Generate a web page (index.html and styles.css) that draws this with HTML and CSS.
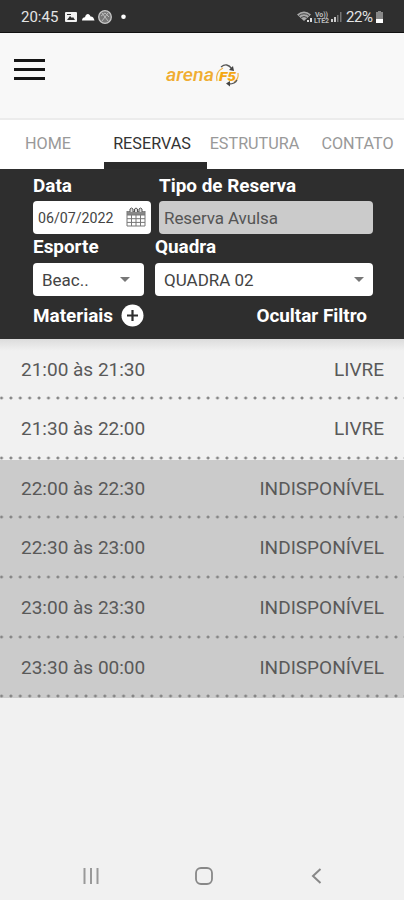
FILE: index.html
```
<!DOCTYPE html>
<html lang="pt-BR">
<head>
    <meta charset="UTF-8">
    <meta name="viewport" content="width=device-width, initial-scale=1.0">
    <title>Arena F5 - Reservas</title>
    <link rel="stylesheet" href="styles.css">
</head>
<body>
    <div class="status">
        <span class="clock">20:45</span>
        <svg class="status-left" width="66" height="18" viewBox="0 0 66 18">
            <rect x="1" y="4" width="12" height="10" rx="1" fill="#f2f2f2"/>
            <path d="M3 12l3-4 2 2 1-1 2 3z" fill="#2f2f2f"/>
            <path d="M3 6h4v1H3z" fill="#2f2f2f"/>
            <path d="M18 12.500c0-2.500 2-3.500 3-3.300C22 5 25.500 5 26.500 8.500c2-.2 3.500 1.500 4 4z" fill="#fff"/>
            <circle cx="41" cy="9" r="6.300" fill="#777" stroke="#c8c8c8" stroke-width="1.300"/>
            <path d="M38 5l6 8M44 5l-6 8M37 8l4-3 4 4" stroke="#bbb" fill="none"/>
            <circle cx="59.500" cy="8.700" r="2.300" fill="#fff"/>
        </svg>
        <svg class="status-right" width="48" height="18" viewBox="0 0 48 18">
            <path d="M0 6.500Q7 .5 14 6.500L7 13z" fill="#aaa"/>
            <path d="M2 7.500q5-3.500 10 0M4 9.500q3-2 6 0" stroke="#444" fill="none"/>
            <path d="M10 12h2v2h-2zM13 10h2v4h-2z" fill="#ddd"/>
            <text x="18" y="8.500" class="volte" textLength="13">Vo))</text>
            <text x="17" y="15" class="volte" textLength="15">LTE2</text>
            <path d="M34 14V11h2v3zM37 14V9h2v5z" fill="#ccc"/>
            <path d="M40 14V7h1.500v7zM43 14V4h1.500v10z" fill="#777"/>
        </svg>
        <span class="percent">22%</span>
        <svg class="battery" width="9" height="14" viewBox="0 0 9 14">
            <path d="M3 1h3v1h2v10H1V2h2z" fill="#888"/>
            <path d="M1 9h7v4H1z" fill="#fff"/>
        </svg>
    </div>

    <header class="header">
        <div class="menu"><i></i><i></i><i></i></div>
        <svg class="logo" width="80" height="30" viewBox="0 0 80 30">
            <text x="4" y="20" class="logo-arena" textLength="48" lengthAdjust="spacingAndGlyphs">arena</text>
            <text x="57" y="20" class="logo-f5" textLength="17" lengthAdjust="spacingAndGlyphs">F5</text>
            <path d="M55 20q-2-9 6-13" stroke="#f0b64b" stroke-width="1.300" fill="none"/>
            <path d="M59 6q6-5 11 2" stroke="#555" stroke-width="1.300" fill="none"/>
            <path d="M67 9l5 1-1-5z" fill="#444"/>
            <path d="M76 12q1 6-4 9" stroke="#f0b64b" stroke-width="1.200" fill="none"/>
            <path d="M75 19q-2 4-8 4" stroke="#555" stroke-width="1.300" fill="none"/>
            <path d="M68 20l-4 2.500 4 3z" fill="#444"/>
        </svg>
    </header>

    <nav class="tabs">
        <a class="tab home">HOME</a>
        <a class="tab reservas active">RESERVAS</a>
        <a class="tab estrutura">ESTRUTURA</a>
        <a class="tab contato">CONTATO</a>
    </nav>

    <section class="filter">
        <div class="line first">
            <div class="field data">
                <label>Data</label>
                <div class="input">
                    <span>06/07/2022</span>
                    <svg width="20" height="22" viewBox="0 0 20 22">
                        <path d="M1 4h18v4H1z" fill="#888"/>
                        <path d="M1 4v15h18V4M1 8h18M1 11.700h18M1 15.400h18M5.500 8v11M10 8v11M14.500 8v11" stroke="#777" fill="none"/>
                        <path d="M4 5V2q1.500-2 3 0v3M8.500 5V2q1.500-2 3 0v3M13 5V2q1.500-2 3 0v3" stroke="#555" fill="#ddd"/>
                    </svg>
                </div>
            </div>
            <div class="field tipo">
                <label>Tipo de Reserva</label>
                <div class="input disabled"><span>Reserva Avulsa</span></div>
            </div>
        </div>
        <div class="line second">
            <div class="field esporte">
                <label>Esporte</label>
                <div class="input select"><span>Beac..</span></div>
            </div>
            <div class="field quadra">
                <label>Quadra</label>
                <div class="input select"><span>QUADRA 02</span></div>
            </div>
        </div>
        <div class="actions">
            <span class="materiais">Materiais</span>
            <svg width="23" height="23" viewBox="0 0 23 23">
                <circle cx="11.500" cy="11.500" r="11" fill="#fff"/>
                <path d="M11.500 6v11M6 11.500h11" stroke="#2e2e2e" stroke-width="2.200"/>
            </svg>
            <span class="ocultar">Ocultar Filtro</span>
        </div>
    </section>

    <ul class="slots">
        <li><span>21:00 às 21:30</span><b>LIVRE</b></li>
        <li><span>21:30 às 22:00</span><b>LIVRE</b></li>
        <li class="off"><span>22:00 às 22:30</span><b>INDISPONÍVEL</b></li>
        <li class="off"><span>22:30 às 23:00</span><b>INDISPONÍVEL</b></li>
        <li class="off"><span>23:00 às 23:30</span><b>INDISPONÍVEL</b></li>
        <li class="off"><span>23:30 às 00:00</span><b>INDISPONÍVEL</b></li>
    </ul>

    <footer class="softkeys">
        <svg width="18" height="18" viewBox="0 0 18 18">
            <path d="M2.500 1v16M9 1v16M15.500 1v16" stroke="#999" stroke-width="2"/>
        </svg>
        <svg width="18" height="18" viewBox="0 0 18 18">
            <rect x="1" y="1" width="16" height="16" rx="5" stroke="#888" stroke-width="1.800" fill="none"/>
        </svg>
        <svg width="18" height="18" viewBox="0 0 18 18">
            <path d="M12.500 2L5 9l7.500 7" stroke="#888" stroke-width="2" fill="none"/>
        </svg>
    </footer>
</body>
</html>
```

FILE: styles.css
```
*{
    margin: 0;
    padding: 0;
    box-sizing: border-box;
}
body {
    width: 404px;
    height: 900px;
    display: flex;
    flex-direction: column;
    background-color: #f1f1f1;
    font-family: Roboto, "Liberation Sans", sans-serif;
    overflow: hidden;
}
svg {
    display: block;
    flex: none;
}

/* barra do sistema */
.status {
    height: 33px;
    flex: none;
    display: flex;
    align-items: center;
    padding: 1px 20px 0 21px;
    background-color: #2f2f2f;
    border-bottom: 1px solid #111;
    color: #e4e4e4;
    font-size: 15px;
}
.clock {
    width: 43px;
}
.status-right {
    margin-left: auto;
    margin-right: 1px;
}
.volte {
    font-size: 7px;
    font-weight: 700;
    fill: #bbb;
}
.percent {
    width: 29px;
    letter-spacing: -0.4px;
}

/* cabecalho */
.header {
    height: 87px;
    flex: none;
    display: flex;
    padding: 26px 14px 0;
    background-color: #f8f8f8;
    border-bottom: 2px solid #ececec;
}
.menu {
    width: 31px;
}
.menu i {
    display: block;
    height: 3px;
    margin-bottom: 6px;
    background-color: #151515;
}
.logo {
    margin: 2px 0 0 117px;
}
.logo-arena {
    font-size: 18px;
    font-style: italic;
    font-weight: 500;
    fill: #f0ad32;
}
.logo-f5 {
    font-size: 13px;
    font-style: italic;
    font-weight: 900;
    fill: #f4a814;
}

/* abas */
.tabs {
    height: 49px;
    flex: none;
    display: flex;
    background-color: #fff;
}
.tab {
    padding-top: 14px;
    text-align: center;
    font-size: 16.200px;
    line-height: 20px;
    color: #999;
    border-bottom: 7px solid transparent;
    white-space: nowrap;
}
.home {
    width: 104px;
    padding-right: 8px;
}
.reservas {
    width: 103px;
    padding-right: 7px;
}
.estrutura {
    width: 95px;
}
.contato {
    width: 102px;
    padding-left: 9px;
}
.active {
    color: #333;
    border-bottom-color: #2b2b2b;
}

/* filtro */
.filter {
    height: 170px;
    flex: none;
    padding: 4px 31px 0 33px;
    background-color: #2e2e2e;
    color: #fff;
    font-size: 18.900px;
    font-weight: 700;
}
.line {
    display: flex;
}
.first {
    gap: 8px;
}
.second {
    gap: 11px;
}
.field label {
    display: block;
    height: 28px;
    line-height: 25px;
    white-space: nowrap;
}
.second label {
    height: 29px;
    line-height: 25px;
}
.data {
    width: 118px;
}
.esporte {
    width: 111px;
}
.tipo,
.quadra {
    flex: 1;
}
.input {
    height: 33px;
    display: flex;
    align-items: center;
    justify-content: space-between;
    padding: 0 5px;
    background-color: #fff;
    border-radius: 4px;
    color: #444;
    font-size: 17px;
    font-weight: 400;
}
.data .input {
    padding-top: 1px;
    font-size: 14.200px;
}
.disabled {
    background-color: #cbcbcb;
    color: #555;
}
.disabled span {
    letter-spacing: -0.100px;
}
.select {
    padding: 0 9px;
}
.esporte .select {
    padding-right: 14px;
}
.select::after {
    content: "";
    border: 5px solid transparent;
    border-top-color: #777;
    border-bottom: 0;
}
.actions {
    height: 38px;
    display: flex;
    align-items: center;
}
.actions svg {
    margin-left: 8px;
}
.ocultar {
    margin-left: auto;
    margin-right: 6px;
}

/* horarios */
.slots {
    list-style: none;
    padding-top: 1.600px;
    background: linear-gradient(#dcdcdc, #f1f1f1 12px);
}
.slots li {
    height: 59.600px;
    display: flex;
    justify-content: space-between;
    padding: 18px 20px 0 21px;
    font-size: 19px;
    line-height: 22px;
    color: #595959;
    /* bolinhas separando as linhas */
    background-image: radial-gradient(circle, #858585 1px, transparent 1.900px);
    background-size: 9.400px 4px;
    background-position: -3.200px 100%;
    background-repeat: repeat-x;
}
.slots b {
    font-weight: 400;
}
.slots .off {
    background-color: #cbcbcb;
}

/* botoes do aparelho */
.softkeys {
    margin-top: auto;
    padding: 0 78px 15px 82px;
    display: flex;
    justify-content: space-between;
}
```
